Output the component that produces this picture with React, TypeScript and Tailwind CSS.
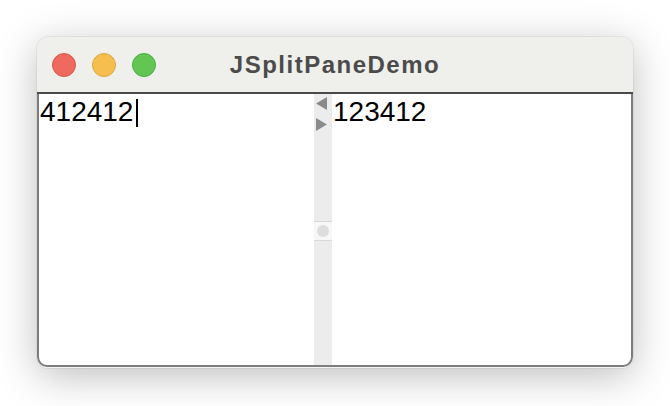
import React from "react";

// Window chrome with a split pane inside
const TrafficLights: React.FC = () => (
  <div className="flex items-center gap-[16px] pl-[15px]">
    <div className="w-[24px] h-[24px] rounded-full bg-[#ee6a5f] border border-[#d9574d]" />
    <div className="w-[24px] h-[24px] rounded-full bg-[#f5be4f] border border-[#dea63b]" />
    <div className="w-[24px] h-[24px] rounded-full bg-[#62c554] border border-[#50ad43]" />
  </div>
);

const Divider: React.FC = () => (
  <div className="w-[18px] bg-[#ececec] flex flex-col">
    {/* one-touch-expand arrows */}
    <div className="flex flex-col gap-[8px] pt-[3px] pl-[2px]">
      <svg width="12" height="13" viewBox="0 0 12 13">
        <polygon points="0,6.5 11,0 11,13" fill="#8a8a8a" />
      </svg>
      <svg width="12" height="13" viewBox="0 0 12 13">
        <polygon points="0,0 11,6.5 0,13" fill="#8a8a8a" />
      </svg>
    </div>
    <div className="mt-[90px] h-[20px] bg-[#f7f7f7] border-y border-[#d8d8d8] flex items-center justify-center">
      <div className="w-[12px] h-[12px] rounded-full bg-[#dddddd]" />
    </div>
  </div>
);

export default function App() {
  return (
    <div className="w-[670px] h-[406px] bg-white pt-[37px] pl-[37px]">
      <div className="w-[596px] h-[331px] rounded-[11px] bg-[#efefec] flex flex-col overflow-hidden shadow-[0_8px_40px_rgba(0,0,0,0.26),0_0_0_1px_rgba(0,0,0,0.05)]">
        {/* Title bar */}
        <div className="h-[55px] relative flex items-center">
          <TrafficLights />
          <div
            className="absolute inset-0 flex items-center justify-center text-[24px] font-bold text-[#4b4b4b] tracking-[1.5px]"
            style={{ fontFamily: '"Liberation Sans", Arial, sans-serif' }}
          >
            JSplitPaneDemo
          </div>
        </div>
        <div className="h-[2px] bg-[#4a4a4a]" />
        {/* Content */}
        <div className="flex-1 flex bg-white border-x-2 border-b-2 border-[#7d7d7d] rounded-b-[10px]">
          <div
            className="w-[275px] text-[28px] text-black leading-[34px] pl-[1px] pt-[1px] flex items-start"
            style={{ fontFamily: '"Liberation Sans", Arial, sans-serif' }}
          >
            <span>412412</span>
            <span className="w-[2px] h-[28px] bg-black ml-[3px] mt-[4px]" />
          </div>
          <Divider />
          <div
            className="flex-1 text-[28px] text-black leading-[34px] pl-[1px] pt-[1px]"
            style={{ fontFamily: '"Liberation Sans", Arial, sans-serif' }}
          >
            123412
          </div>
        </div>
        <div className="h-[1px] bg-[#f4f4f4]" />
      </div>
    </div>
  );
}
